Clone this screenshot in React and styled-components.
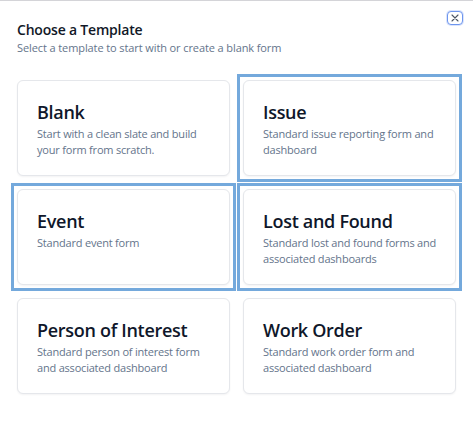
import React from 'react';
import styled, { createGlobalStyle } from 'styled-components';

const GlobalStyle = createGlobalStyle`
  html, body {
    margin: 0;
    padding: 0;
    background: #ffffff;
  }
  body {
    font-family: 'Open Sans', 'Noto Sans', sans-serif;
    -webkit-font-smoothing: antialiased;
  }
`;

const templates = [
  { name: 'Blank', text: 'Start with a clean slate and build your form from scratch.', selected: false },
  { name: 'Issue', text: 'Standard issue reporting form and dashboard', selected: true },
  { name: 'Event', text: 'Standard event form', selected: true },
  { name: 'Lost and Found', text: 'Standard lost and found forms and associated dashboards', selected: true },
  { name: 'Person of Interest', text: 'Standard person of interest form and associated dashboard', selected: false },
  { name: 'Work Order', text: 'Standard work order form and associated dashboard', selected: false },
];

const App = () => {
  return (
    <>
      <GlobalStyle />
      <Dialog>
        <Header>
          <div>
            <Title>Choose a Template</Title>
            <Subtitle>Select a template to start with or create a blank form</Subtitle>
          </div>
          <CloseButton aria-label='Close'>
            <svg width='8' height='8' viewBox='0 0 8 8'>
              <path d='M1 1L7 7M7 1L1 7' stroke='#4b5563' strokeWidth='1.1' strokeLinecap='round' />
            </svg>
          </CloseButton>
        </Header>
        <Grid>
          {templates.map((t) => (
            <Card key={t.name} $selected={t.selected}>
              <CardTitle>{t.name}</CardTitle>
              <CardText>{t.text}</CardText>
            </Card>
          ))}
        </Grid>
      </Dialog>
    </>
  );
};

const Dialog = styled.div`
  width: 473px;
  height: 422px;
  box-sizing: border-box;
  border-top: 1px solid #d4d4d8;
  padding: 10px 10px 0 17px;
`;

const Header = styled.div`
  display: flex;
  justify-content: space-between;
  align-items: flex-start;
  height: 69px;
`;

const Title = styled.h2`
  margin: 9px 0 0;
  font-size: 14px;
  line-height: 20px;
  font-weight: 600;
  color: #111827;
  letter-spacing: -0.2px;
`;

const Subtitle = styled.p`
  margin: 0;
  font-size: 11px;
  line-height: 16px;
  color: #64748b;
  letter-spacing: -0.1px;
`;

const CloseButton = styled.button`
  width: 16px;
  height: 14px;
  padding: 0;
  display: flex;
  align-items: center;
  justify-content: center;
  background: #fff;
  border: 1.5px solid #6d95ee;
  border-radius: 4px;
  box-shadow: 0 0 0 1px rgba(109, 149, 238, 0.25);
`;

const Grid = styled.div`
  display: grid;
  grid-template-columns: 213px 213px;
  grid-auto-rows: 96px;
  gap: 13px;
`;

const Card = styled.div`
  position: relative;
  box-sizing: border-box;
  padding: 19px 12px 19px 19px;
  border: 1px solid #e5e7eb;
  border-radius: 6px;
  background: #fff;
  box-shadow: 0 1px 2px rgba(15, 23, 42, 0.05);

  &::before {
    content: '';
    display: ${(p) => (p.$selected ? 'block' : 'none')};
    position: absolute;
    inset: -7px;
    border: 3px solid #74a9dc;
    pointer-events: none;
  }
`;

const CardTitle = styled.h3`
  margin: 0 0 2px;
  font-size: 18px;
  line-height: 24px;
  font-weight: 600;
  color: #0f172a;
  letter-spacing: -0.3px;
`;

const CardText = styled.p`
  margin: 0;
  font-size: 11px;
  line-height: 16px;
  color: #64748b;
  letter-spacing: -0.2px;
`;

export default App;
